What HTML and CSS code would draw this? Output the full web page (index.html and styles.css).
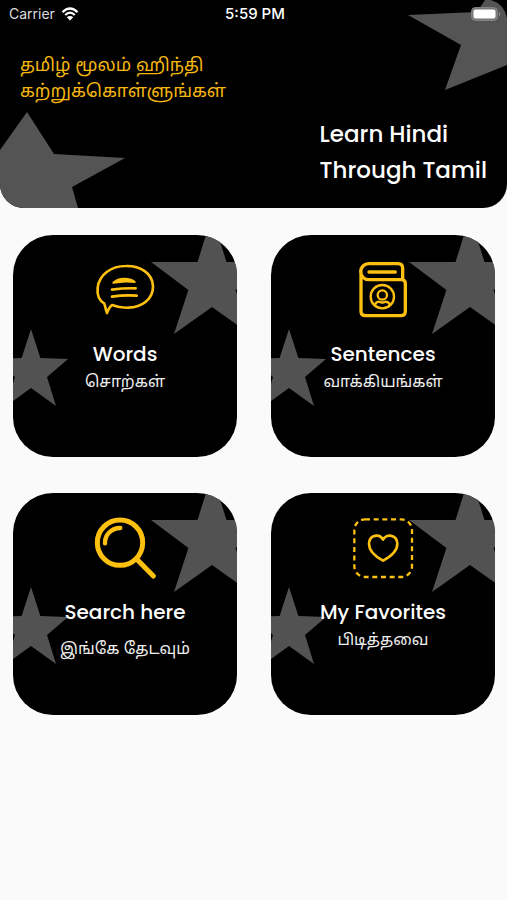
FILE: index.html
```html
<!DOCTYPE html>
<html lang="ta">
<head>
<meta charset="utf-8">
<meta name="viewport" content="width=device-width, initial-scale=1">
<title>Learn Hindi Through Tamil</title>
<link rel="stylesheet" href="styles.css">
</head>
<body>
<svg class="defs" width="0" height="0" aria-hidden="true">
  <symbol id="star-large" viewBox="0 0 86 100">
    <path d="M0 27H46.500L61-19 75.500 27H122L84.600 55 99 99 61 72 23 99 37.400 55Z"/>
  </symbol>
  <symbol id="star-small" viewBox="0 0 56 78">
    <path d="M18 0 27.400 29 55 30 34 48 43 77 18 59-7 77 2 48-19 30 8.600 29Z"/>
  </symbol>
</svg>

<header class="hero">
  <svg class="hero-star hero-star-right" viewBox="0 0 100 92" aria-hidden="true"><path d="M1 15 70 12 78 0H84Q97 4 100 18V65L38 90 54 45Z"/></svg>
  <svg class="hero-star hero-star-left" viewBox="0 0 126 96" aria-hidden="true"><path d="M27 0 54 42 125 46 72 75 78 96H0V38Z"/></svg>
  <div class="status">
    <span class="carrier">Carrier
      <svg class="wifi" viewBox="0 0 18 14" aria-hidden="true"><path d="M1.500 5.200Q9-2.200 16.500 5.200M4.200 8Q9 3.200 13.800 8" fill="none" stroke="#fff" stroke-width="2.300"/><path d="M9 13.500 5.800 10.200Q9 7.600 12.200 10.200Z" fill="#fff"/></svg>
    </span>
    <time class="clock">5:59 PM</time>
    <svg class="battery" viewBox="0 0 30 14" aria-hidden="true"><rect x=".5" y=".5" width="26" height="13" rx="4" fill="#777" stroke="#858585"/><rect x="2.500" y="2.500" width="22" height="9" rx="2" fill="#fff"/><path d="M28 4.500Q30 7 28 9.500Z" fill="#999"/></svg>
  </div>
  <p class="hero-tamil">தமிழ் மூலம் ஹிந்தி<br>கற்றுக்கொள்ளுங்கள்</p>
  <h1 class="hero-title" lang="en">Learn Hindi<br>Through Tamil</h1>
</header>

<main class="grid">
  <a class="card" href="#words">
    <svg class="star star-large" aria-hidden="true"><use href="#star-large"/></svg>
    <svg class="star star-small" aria-hidden="true"><use href="#star-small"/></svg>
    <svg class="icon" viewBox="0 0 186 186" aria-hidden="true">
      <path d="M31 134C15 124 9 105 11 87 15 45 54 21 95 21 139 20 176 43 177 82 178 121 143 145 103 146 85 147 67 143 54 138 46 144 42 154 39 162 35 154 35 145 31 134Z" stroke-width="8"/>
      <path class="solid" d="M58 71Q70 59 91 59 113 59 122 69 102 67 86 68 70 69 58 71Z" stroke-width="6"/>
      <path d="M54 92Q90 87 125 88M54 113Q91 107 128 110" stroke-width="8"/>
    </svg>
    <h2 class="title" lang="en">Words</h2>
    <p class="subtitle">சொற்கள்</p>
  </a>
  <a class="card" href="#sentences">
    <svg class="star star-large" aria-hidden="true"><use href="#star-large"/></svg>
    <svg class="star star-small" aria-hidden="true"><use href="#star-small"/></svg>
    <svg class="icon" viewBox="0 0 186 186" aria-hidden="true">
      <path d="M27 38V157Q27 170 40 170H147Q160 170 160 157V74Q160 64 151 62H50A24 24 0 0 1 50 14H138Q152 14 152 28V62M51 39H130" stroke-width="10"/>
      <circle cx="91" cy="113" r="35" stroke-width="7"/>
      <circle cx="91" cy="108" r="14" stroke-width="7"/>
      <path d="M68 138Q72 128 82 128 91 133 100 128 110 128 114 138" stroke-width="7"/>
    </svg>
    <h2 class="title" lang="en">Sentences</h2>
    <p class="subtitle">வாக்கியங்கள்</p>
  </a>
  <a class="card" href="#search">
    <svg class="star star-large" aria-hidden="true"><use href="#star-large"/></svg>
    <svg class="star star-small" aria-hidden="true"><use href="#star-small"/></svg>
    <svg class="icon" viewBox="0 0 186 186" aria-hidden="true">
      <circle cx="78" cy="77" r="68" stroke-width="15"/>
      <path d="M33 79C32 54 52 33 79 33" stroke-width="13"/>
      <path d="M127 125 178 177" stroke-width="15"/>
    </svg>
    <h2 class="title" lang="en">Search here</h2>
    <p class="subtitle subtitle-spaced">இங்கே தேடவும்</p>
  </a>
  <a class="card" href="#favorites">
    <svg class="star star-large" aria-hidden="true"><use href="#star-large"/></svg>
    <svg class="star star-small" aria-hidden="true"><use href="#star-small"/></svg>
    <svg class="icon" viewBox="0 0 186 186" aria-hidden="true">
      <rect class="dashed" x="7" y="7" width="173" height="173" rx="32" stroke-width="7"/>
      <path d="M93 131C80 124 51 105 51 81 51 53 83 48 93 68 103 48 136 53 136 81 136 105 106 124 93 131Z" stroke-width="8"/>
    </svg>
    <h2 class="title" lang="en">My Favorites</h2>
    <p class="subtitle">பிடித்தவை</p>
  </a>
</main>
</body>
</html>
```
FILE: styles.css
```css
* {
  box-sizing: border-box;
}

body {
  margin: 0;
  background: #fafafa;
  color: #fff;
  font-family: Poppins, Inter, "Noto Sans Tamil", "Noto Sans", sans-serif;
}

h1,
h2,
p {
  margin: 0;
  font-weight: 500;
}

.defs {
  position: absolute;
}

.hero {
  position: relative;
  overflow: hidden;
  padding-bottom: 20px;
  border-radius: 0 0 24px 24px;
  background: #000;
}

.hero-star {
  position: absolute;
  fill: #545454;
}

.hero-star-right {
  top: 0;
  right: 0;
  width: 100px;
  height: 92px;
}

.hero-star-left {
  bottom: 0;
  left: 0;
  width: 126px;
  height: 96px;
}

.status {
  position: relative;
  display: grid;
  grid-template-columns: 1fr auto 1fr;
  align-items: center;
  height: 27px;
  padding: 0 6px 0 9px;
  font-family: Inter, sans-serif;
  font-size: 14px;
}

.carrier {
  display: flex;
  align-items: center;
  gap: 6px;
  color: #ddd;
}

.wifi {
  width: 18px;
  height: 14px;
}

.clock {
  font-size: 15px;
  font-weight: 500;
}

.battery {
  justify-self: end;
  width: 30px;
  height: 14px;
}

.hero-tamil {
  position: relative;
  margin: 25px 20px 0;
  color: #f5b70f;
  font-size: 18px;
  font-weight: 400;
  line-height: 26px;
}

.hero-title {
  position: relative;
  width: max-content;
  margin: 12px 20px 0 auto;
  font-size: 23px;
  line-height: 36px;
}

.grid {
  display: grid;
  grid-template-columns: 1fr 1fr;
  gap: 36px 34px;
  padding: 27px 12px 27px 13px;
}

.card {
  position: relative;
  display: flex;
  flex-direction: column;
  align-items: center;
  overflow: hidden;
  min-height: 222px;
  padding: 24px 0;
  border-radius: 40px;
  background: #000;
  color: #fff;
  text-decoration: none;
}

.star {
  position: absolute;
  fill: #525252;
}

.star-large {
  top: 0;
  right: 0;
  width: 86px;
  height: 100px;
}

.star-small {
  top: 94px;
  left: 0;
  width: 56px;
  height: 78px;
}

.icon {
  width: 62px;
  height: 62px;
  fill: none;
  stroke: #fdc010;
  stroke-linecap: round;
  stroke-linejoin: round;
}

.solid {
  fill: #fdc010;
}

.dashed {
  stroke-dasharray: 15 11;
  stroke-linecap: butt;
}

.title {
  position: relative;
  margin-top: 18px;
  font-size: 20px;
  line-height: 30px;
}

.subtitle {
  position: relative;
  color: #eee;
  font-size: 16px;
  font-weight: 400;
  line-height: 26px;
}

.subtitle-spaced {
  margin-top: 9px;
}
```
